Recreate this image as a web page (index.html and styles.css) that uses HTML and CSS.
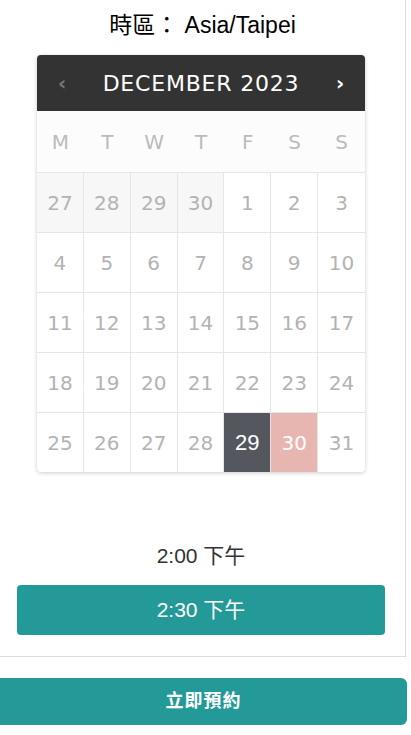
FILE: index.html
```html
<!DOCTYPE html>
<html lang="zh-Hant">
<head>
	<meta charset="UTF-8">
	<title>預約</title>
	<link rel="stylesheet" href="styles.css">
</head>
<body>
	<div class="panel">
		<h2 class="tz">時區： Asia/Taipei</h2>
		<div class="calendar">
			<div class="cal-head">
				<a href="javascript:;" class="nav prev">‹</a>
				<span class="month">DECEMBER 2023</span>
				<a href="javascript:;" class="nav next">›</a>
			</div>
			<div class="week">
				<span>M</span><span>T</span><span>W</span><span>T</span><span>F</span><span>S</span><span>S</span>
			</div>
			<div class="days">
				<span class="old">27</span><span class="old">28</span><span class="old">29</span><span class="old">30</span><span>1</span><span>2</span><span>3</span>
				<span>4</span><span>5</span><span>6</span><span>7</span><span>8</span><span>9</span><span>10</span>
				<span>11</span><span>12</span><span>13</span><span>14</span><span>15</span><span>16</span><span>17</span>
				<span>18</span><span>19</span><span>20</span><span>21</span><span>22</span><span>23</span><span>24</span>
				<span>25</span><span>26</span><span>27</span><span>28</span><span class="today">29</span><span class="picked">30</span><span>31</span>
			</div>
		</div>
		<div class="times">
			<div class="slot">2:00 下午</div>
			<a href="javascript:;" class="slot active">2:30 下午</a>
		</div>
	</div>
	<a href="javascript:;" class="book">立即預約</a>
</body>
</html>
```

FILE: styles.css
```css
body {
	margin: 0;
	font-family: "Liberation Sans", Arial, "Noto Sans CJK TC", sans-serif;
	color: #333;
}
a {
	text-decoration: none;
}
.panel {
	width: 406px;
	height: 657px;
	box-sizing: border-box;
	border-right: 1px solid #ddd;
	border-bottom: 1px solid #ddd;
	padding-top: 11px;
}
.tz {
	margin: 0 0 16px;
	font-size: 23px;
	font-weight: normal;
	line-height: 28px;
	color: #000;
	text-align: center;
}
.calendar {
	width: 328px;
	margin-left: 37px;
	border-radius: 4px;
	box-shadow: 0 1px 4px rgba(0,0,0,.2);
	overflow: hidden;
	font-family: "DejaVu Sans", Verdana, sans-serif;
	background: #fff;
}
.cal-head {
	display: flex;
	align-items: center;
	height: 56px;
	background: #333;
	color: #fff;
}
.cal-head .nav {
	width: 50px;
	text-align: center;
	font-size: 20px;
	font-weight: bold;
	color: #fff;
}
.cal-head .prev {
	color: #777;
}
.cal-head .month {
	flex: 1;
	text-align: center;
	font-size: 22px;
	letter-spacing: 0.8px;
}
.week {
	display: grid;
	grid-template-columns: repeat(7, 1fr);
	height: 61px;
	background: #fcfcfc;
}
.week span {
	display: flex;
	align-items: center;
	justify-content: center;
	color: #bbb;
	font-size: 20px;
}
.days {
	display: grid;
	grid-template-columns: repeat(7, 1fr);
	grid-auto-rows: 60px;
}
.days span {
	display: flex;
	align-items: center;
	justify-content: center;
	border-top: 1px solid #e6e6e6;
	border-right: 1px solid #e6e6e6;
	color: #b3b3b3;
	font-size: 20px;
}
.days span:nth-child(7n) {
	border-right: none;
}
.days .old {
	background: #f7f7f7;
}
.days .today {
	background: #54585e;
	color: #fff;
	font-family: "Liberation Sans", Arial, sans-serif;
	font-size: 22px;
}
.days .picked {
	background: #e8b6b1;
	color: #fff;
}
.times {
	margin-top: 59px;
	padding: 0 20px 0 17px;
}
.slot {
	display: block;
	height: 50px;
	line-height: 50px;
	text-align: center;
	font-size: 21px;
	color: #333;
}
.slot.active {
	margin-top: 4px;
	background: #249a98;
	color: #fff;
	border-radius: 4px;
}
.book {
	display: block;
	width: 407px;
	height: 47px;
	margin-top: 21px;
	line-height: 47px;
	background: #249a98;
	color: #fff;
	text-align: center;
	font-size: 18px;
	font-weight: bold;
	letter-spacing: 1px;
	border-radius: 0 6px 6px 0;
}
```
